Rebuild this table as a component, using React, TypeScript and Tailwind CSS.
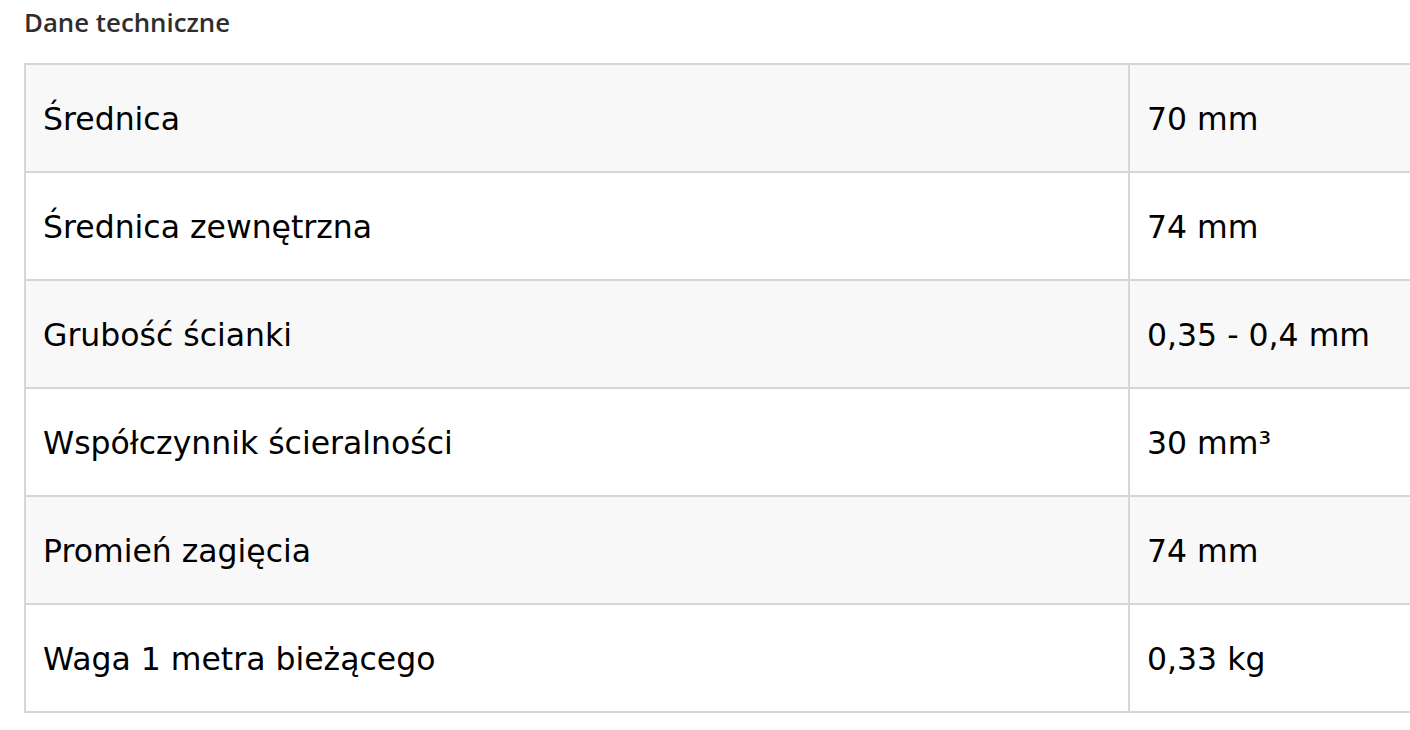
import React from "react";

const rows: [string, string][] = [
  ["Średnica", "70 mm"],
  ["Średnica zewnętrzna", "74 mm"],
  ["Grubość ścianki", "0,35 - 0,4 mm"],
  ["Współczynnik ścieralności", "30 mm³"],
  ["Promień zagięcia", "74 mm"],
  ["Waga 1 metra bieżącego", "0,33 kg"],
];

export default function App() {
  return (
    <div className="w-[1410px] h-[730px] overflow-hidden bg-white">
      <div className="pl-[24px] pt-[6px]">
        <h2 className="font-['Open_Sans',sans-serif] font-semibold text-[25.8px] leading-[32px] text-[#2e2e2e]">
          Dane techniczne
        </h2>
        <table className="mt-[25px] w-[1400px] border-collapse font-['DejaVu_Sans',sans-serif] text-[31.5px] text-black">
          <tbody>
            {rows.map(([k, v], i) => (
              <tr key={k} className={i % 2 === 0 ? "bg-[#f8f8f8]" : "bg-white"}>
                <td className="h-[108px] w-[1104px] border-2 border-[#d6d6d6] px-[17px] pt-[3px] align-middle">
                  {k}
                </td>
                <td className="h-[108px] border-2 border-[#d6d6d6] px-[17px] pt-[3px] align-middle">{v}</td>
              </tr>
            ))}
          </tbody>
        </table>
      </div>
    </div>
  );
}
